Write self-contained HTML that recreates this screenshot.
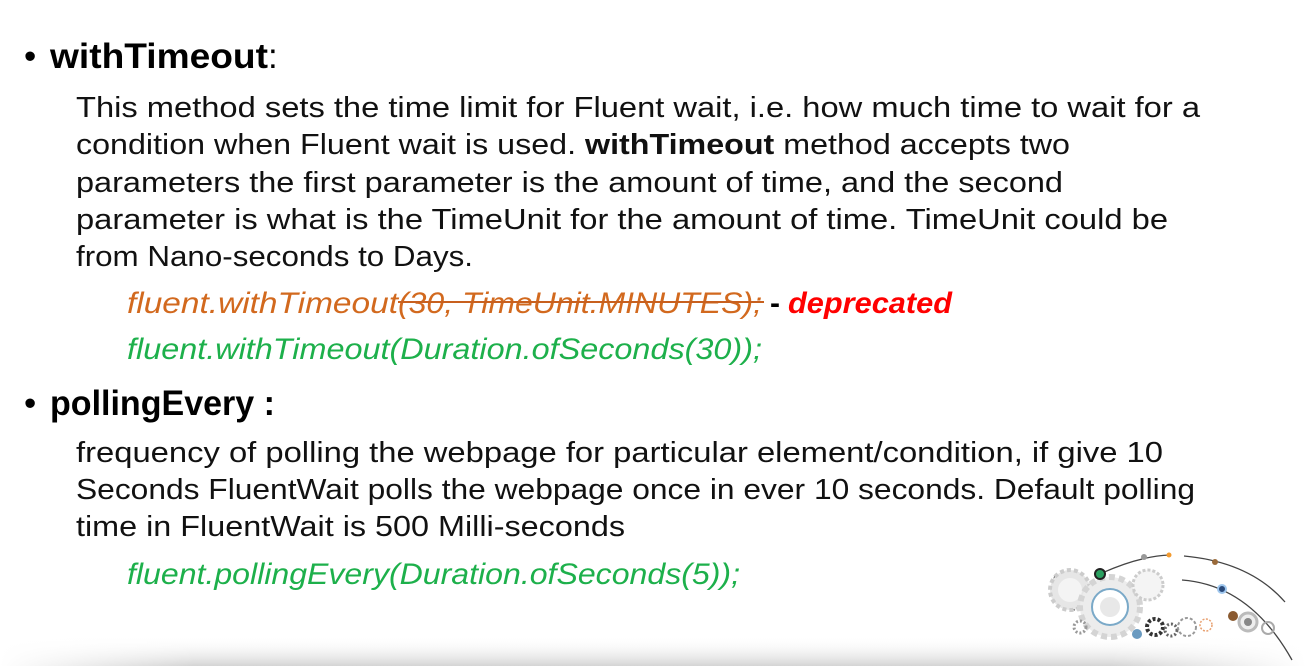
<!DOCTYPE html>
<html><head><meta charset="utf-8"><style>
html,body{margin:0;padding:0;background:#fff;width:1306px;height:666px;overflow:hidden}
svg{display:block}
text{font-family:"Liberation Sans",sans-serif}
</style></head><body>
<svg width="1306" height="666" viewBox="0 0 1306 666" xmlns="http://www.w3.org/2000/svg">
<defs>
<linearGradient id="sh" x1="0" y1="0" x2="0" y2="1">
<stop offset="0" stop-color="#fff" stop-opacity="0"/><stop offset="1" stop-color="#d4d4d4"/>
</linearGradient>
<linearGradient id="shx" x1="0" y1="0" x2="1" y2="0">
<stop offset="0" stop-color="#fff" stop-opacity="1"/><stop offset="0.15" stop-color="#fff" stop-opacity="0"/><stop offset="0.85" stop-color="#fff" stop-opacity="0"/><stop offset="1" stop-color="#fff" stop-opacity="1"/>
</linearGradient>
</defs>
<rect x="0" y="636" width="1306" height="30" fill="url(#sh)"/>
<rect x="0" y="636" width="1306" height="30" fill="url(#shx)"/>

<g font-size="35" fill="#000">
<text x="24" y="68">•</text>
<text x="50" y="68" font-weight="bold" textLength="218" lengthAdjust="spacingAndGlyphs">withTimeout</text>
<text x="268" y="68">:</text>
<text x="24" y="415">•</text>
<text x="50" y="415" font-weight="bold" textLength="225" lengthAdjust="spacingAndGlyphs">pollingEvery :</text>
</g>

<g font-size="28.5" fill="#111">
<text x="76" y="117" textLength="1124" lengthAdjust="spacingAndGlyphs">This method sets the time limit for Fluent wait, i.e. how much time to wait for a</text>
<text x="76" y="154" textLength="994" lengthAdjust="spacingAndGlyphs">condition when Fluent wait is used. <tspan font-weight="bold">withTimeout</tspan> method accepts two</text>
<text x="76" y="192" textLength="987" lengthAdjust="spacingAndGlyphs">parameters the first parameter is the amount of time, and the second</text>
<text x="76" y="229" textLength="1092" lengthAdjust="spacingAndGlyphs">parameter is what is the TimeUnit for the amount of time. TimeUnit could be</text>
<text x="76" y="266" textLength="397" lengthAdjust="spacingAndGlyphs">from Nano-seconds to Days.</text>
<text x="76" y="462" textLength="1087" lengthAdjust="spacingAndGlyphs">frequency of polling the webpage for particular element/condition, if give 10</text>
<text x="76" y="499" textLength="1119" lengthAdjust="spacingAndGlyphs">Seconds FluentWait polls the webpage once in ever 10 seconds. Default polling</text>
<text x="76" y="536" textLength="549" lengthAdjust="spacingAndGlyphs">time in FluentWait is 500 Milli-seconds</text>
</g>

<g font-size="30" font-style="italic">
<text x="127" y="313" fill="#d2691e" textLength="271" lengthAdjust="spacingAndGlyphs">fluent.withTimeout</text>
<text x="398" y="313" fill="#d2691e" textLength="364" lengthAdjust="spacingAndGlyphs">(30, TimeUnit.MINUTES);</text>
<line x1="398" y1="302" x2="764" y2="302" stroke="#c8601e" stroke-width="2"/>
<text x="770" y="313" fill="#000" font-style="normal" font-weight="bold">-</text>
<text x="788" y="313" fill="#ff0000" font-weight="bold" textLength="164" lengthAdjust="spacingAndGlyphs">deprecated</text>
<text x="127" y="359" fill="#1db04b" textLength="635" lengthAdjust="spacingAndGlyphs">fluent.withTimeout(Duration.ofSeconds(30));</text>
<text x="127" y="584" fill="#1db04b" textLength="613" lengthAdjust="spacingAndGlyphs">fluent.pollingEvery(Duration.ofSeconds(5));</text>
</g>

<g fill="none" stroke="#444" stroke-width="1.3">
<path d="M1102 573 Q1140 556 1170 555"/>
<path d="M1184 556 Q1250 562 1285 602"/>
<path d="M1182 580 Q1250 585 1292 660"/>
<path d="M1055 575 Q1048 600 1075 610"/>
</g>
<g>
<circle cx="1070" cy="590" r="20" fill="#e6e6e6" stroke="#ccc" stroke-dasharray="4 3" stroke-width="4"/>
<circle cx="1070" cy="590" r="12" fill="#f4f4f4"/>
<circle cx="1110" cy="607" r="30" fill="#ececec" stroke="#d4d4d4" stroke-dasharray="6 4" stroke-width="6"/>
<circle cx="1110" cy="607" r="18" fill="#fff" stroke="#7aa9c8" stroke-width="2"/>
<circle cx="1110" cy="607" r="10" fill="#e8e8e8"/>
<circle cx="1148" cy="585" r="15" fill="#f4f4f4" stroke="#ccc" stroke-dasharray="3 2" stroke-width="3"/>
<circle cx="1100" cy="574" r="5" fill="#2aa060" stroke="#222" stroke-width="2"/>
<circle cx="1144" cy="557" r="3" fill="#999"/>
<circle cx="1169" cy="555" r="2.5" fill="#f39a2e"/>
<circle cx="1215" cy="562" r="3" fill="#9a6a3a"/>
<circle cx="1222" cy="589" r="4" fill="#2a4a7a" stroke="#9fc7ee" stroke-width="2"/>
<circle cx="1155" cy="627" r="8" fill="none" stroke="#333" stroke-width="4" stroke-dasharray="3 2"/>
<circle cx="1171" cy="630" r="6" fill="none" stroke="#666" stroke-width="3" stroke-dasharray="2 2"/>
<circle cx="1187" cy="627" r="9" fill="none" stroke="#999" stroke-width="2" stroke-dasharray="3 2"/>
<circle cx="1206" cy="625" r="6" fill="none" stroke="#e8a070" stroke-width="1.5" stroke-dasharray="2 1.5"/>
<circle cx="1080" cy="627" r="6" fill="none" stroke="#999" stroke-width="3" stroke-dasharray="2 2"/>
<circle cx="1137" cy="634" r="5" fill="#6a9ac0"/>
<circle cx="1233" cy="616" r="5" fill="#8a5a30"/>
<circle cx="1248" cy="622" r="9" fill="#eee" stroke="#bbb" stroke-width="3"/>
<circle cx="1248" cy="622" r="4" fill="#888"/>
<circle cx="1268" cy="628" r="6" fill="none" stroke="#aaa" stroke-width="2"/>
</g>
</svg>
</body></html>
